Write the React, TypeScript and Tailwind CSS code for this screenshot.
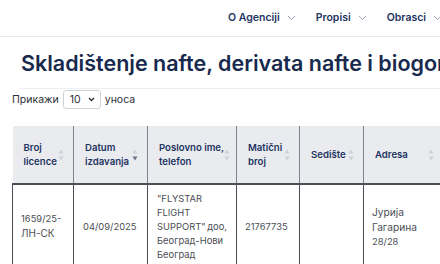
import React from "react";

const font = { fontFamily: "Inter, 'Noto Sans', sans-serif" };

function Chevron() {
  return (
    <svg width="9" height="6" viewBox="0 0 9 6" className="ml-[7px]">
      <path d="M1 1l3.5 3.5L8 1" fill="none" stroke="#9aa3b2" strokeWidth="1" />
    </svg>
  );
}

function SortIcon({ active }: { active?: boolean }) {
  return (
    <svg width="6" height="12" viewBox="0 0 6 12" className="shrink-0">
      <path d="M3 0.5L5.5 4.5H0.5Z" fill="#cdd1d8" />
      <path d="M3 11.5L5.5 7.5H0.5Z" fill={active ? "#6a7486" : "#cdd1d8"} />
    </svg>
  );
}

const headers: { label: string[]; w: string; active?: boolean }[] = [
  { label: ["Broj", "licence"], w: "w-[61px]" },
  { label: ["Datum", "izdavanja"], w: "w-[74px]", active: true },
  { label: ["Poslovno ime,", "telefon"], w: "w-[89px]" },
  { label: ["Matični", "broj"], w: "w-[63px]" },
  { label: ["Sedište"], w: "w-[64px]" },
  { label: ["Adresa"], w: "w-[80px]" },
];

export default function App() {
  return (
    <div className="w-[440px] h-[264px] overflow-hidden bg-white" style={font}>
      {/* Header */}
      <header className="h-[37px] border-b border-[#e6e9ee] flex items-center pl-[228px] whitespace-nowrap">
        <nav className="flex items-center gap-[20px] text-[10.5px] font-semibold text-[#1d3461]">
          <span className="flex items-center">O Agenciji<Chevron /></span>
          <span className="flex items-center">Propisi<Chevron /></span>
          <span className="flex items-center">Obrasci<Chevron /></span>
        </nav>
      </header>

      {/* Title */}
      <h1 className="pl-[21px] pt-[10px] h-[51px] text-[21.5px] font-semibold text-[#17294d] whitespace-nowrap">
        Skladištenje nafte, derivata nafte i biogoriva
      </h1>
      <div className="ml-[20px] border-t border-[#eceef1]" />

      {/* Length select */}
      <div className="flex items-center pl-[12px] pt-[1px] text-[10.5px] text-[#2b2f36]">
        <span>Прикажи</span>
        <div className="ml-[4px] w-[38px] h-[19px] border border-[#cfd3d9] rounded-[3px] flex items-center justify-between pl-[6px] pr-[5px] text-[#2b2f36]">
          <span>10</span>
          <svg width="7" height="5" viewBox="0 0 7 5">
            <path d="M1 1l2.5 2.5L6 1" fill="none" stroke="#2b2f36" strokeWidth="1.3" />
          </svg>
        </div>
        <span className="ml-[4px]">уноса</span>
      </div>

      {/* Table */}
      <div className="pl-[12px] pt-[17px]">
        <table className="border-collapse table-fixed w-[500px]">
          <thead>
            <tr className="bg-[#e9ebef] h-[58px] border-b-2 border-[#4a4f57]">
              {headers.map((h, i) => (
                <th
                  key={i}
                  className={`${h.w} ${i > 0 ? "border-l border-[#7d848f]" : ""} p-0 text-left align-middle`}
                >
                  <div className="flex items-center justify-between pl-[11px] pr-[9px] text-[9.6px] leading-[14px] font-semibold text-[#1d3461]">
                    <span>
                      {h.label.map((l, j) => (
                        <span key={j} className="block whitespace-nowrap">{l}</span>
                      ))}
                    </span>
                    <SortIcon active={h.active} />
                  </div>
                </th>
              ))}
              <th className="border-l border-[#7d848f]" />
            </tr>
          </thead>
          <tbody className="text-[9.4px] leading-[14px] text-[#4a4e55]">
            <tr className="h-[84px]">
              <td className="border-l border-[#4a4f57] px-[8px] align-middle">
                1659/25-<br />
                <span className="text-[10px]">ЛН-СК</span>
              </td>
              <td className="border-l border-[#4a4f57] px-[9px] align-middle">04/09/2025</td>
              <td className="border-l border-[#4a4f57] pl-[9px] align-middle whitespace-nowrap">
                <div className="w-[70px]">
                  <span className="block">"FLYSTAR</span>
                  <span className="block">FLIGHT</span>
                  <span className="flex justify-between">
                    <span>SUPPORT"</span>
                    <span>доо,</span>
                  </span>
                  <span className="block">Београд-Нови</span>
                  <span className="block">Београд</span>
                </div>
              </td>
              <td className="border-l border-[#4a4f57] px-[8px] align-middle">21767735</td>
              <td className="border-l border-[#4a4f57] px-[8px] align-middle"></td>
              <td className="border-l border-[#4a4f57] px-[8px] align-middle">
                <span className="text-[10.2px]">Јурија<br />Гагарина</span><br />28/28
              </td>
              <td className="border-l border-[#4a4f57]" />
            </tr>
          </tbody>
        </table>
      </div>
    </div>
  );
}
